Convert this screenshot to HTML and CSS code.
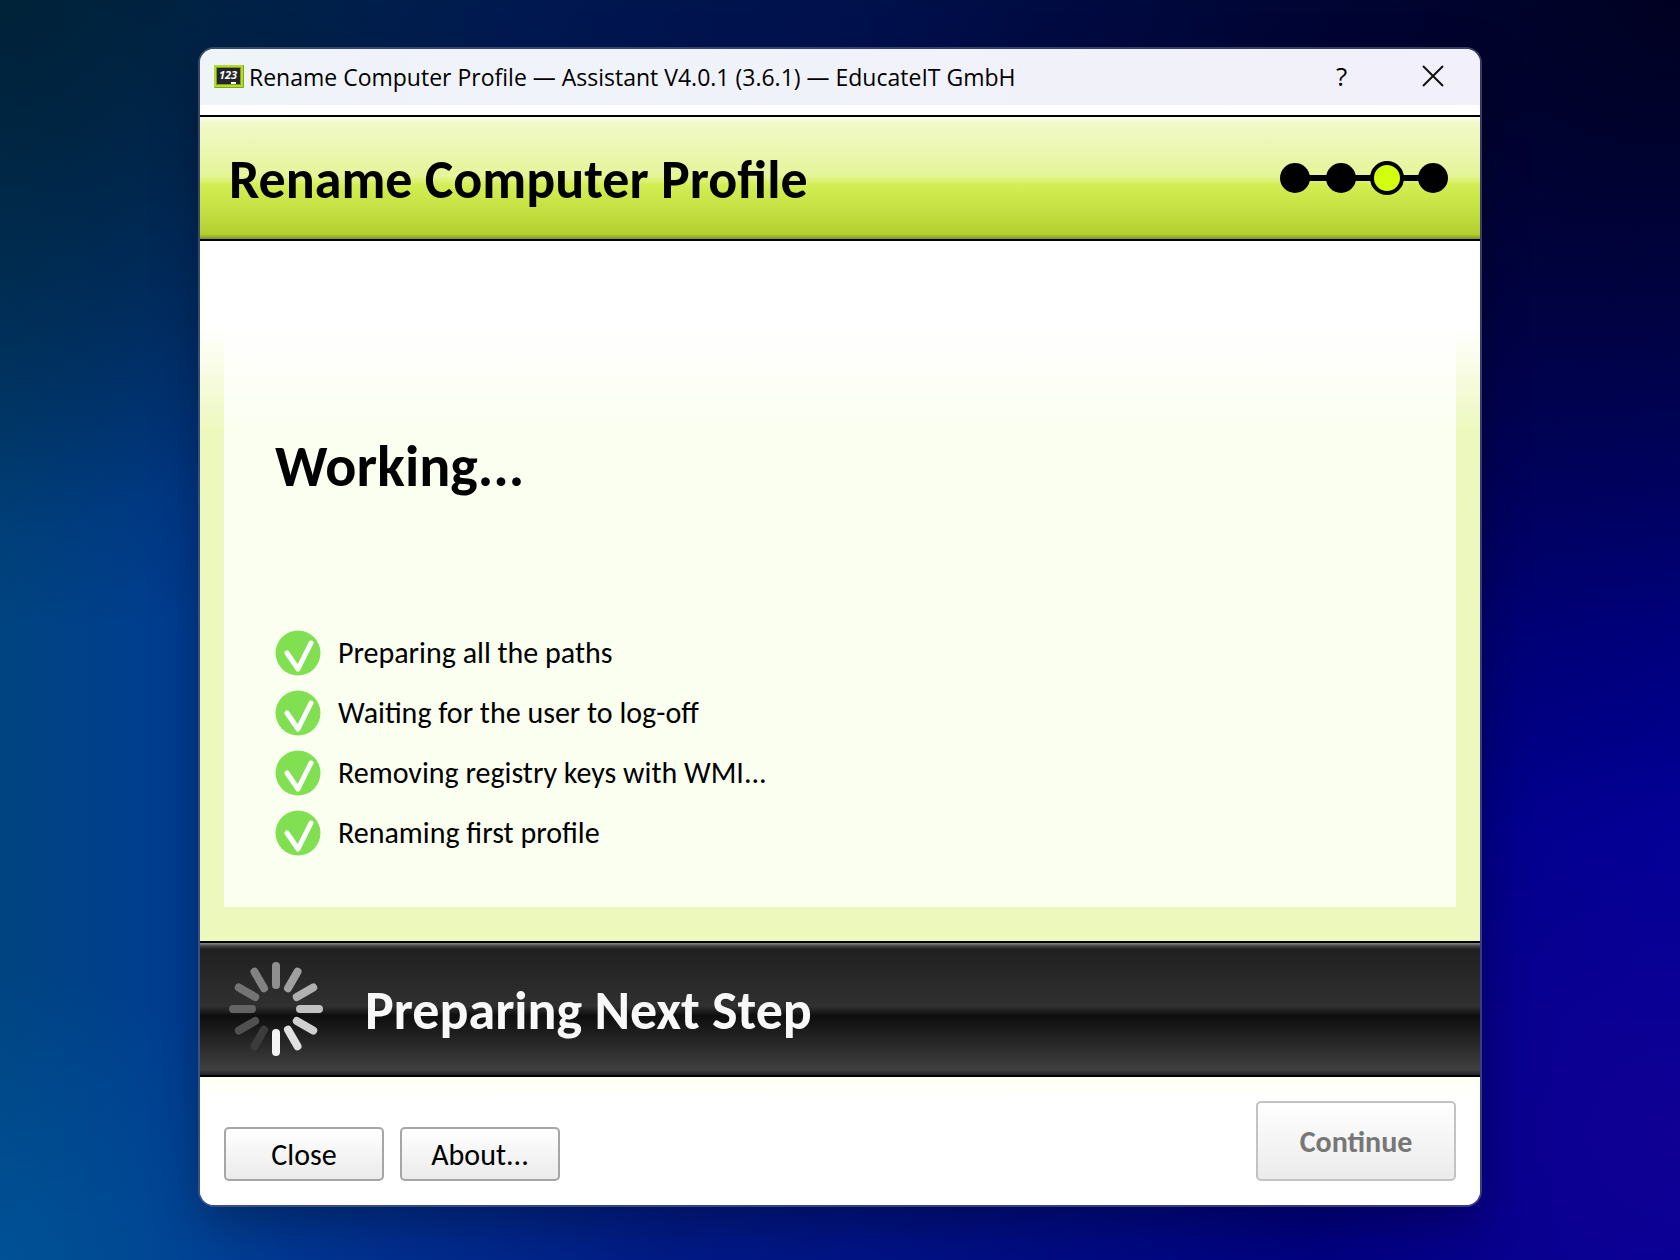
FILE: index.html
```
<!DOCTYPE html>
<html lang="en">
<head>
    <meta charset="UTF-8">
    <meta name="viewport" content="width=device-width, initial-scale=1.0">
    <title>Rename Computer Profile</title>
    <link rel="stylesheet" href="styles.css">
</head>
<body>
    <div class="window">
        <div class="titlebar">
            <svg class="app-icon" width="30" height="23" viewBox="0 0 30 23">
                <rect width="30" height="23" rx="1" fill="#7fa80e"/>
                <rect width="29" height="22" rx="1" fill="#b4dc28"/>
                <rect x="2" y="2" width="25" height="18" fill="#7c9c1c"/>
                <rect x="3" y="3" width="23" height="16" fill="#24262a"/>
                <text x="14" y="14" text-anchor="middle" class="app-icon-text">123</text>
                <rect x="17" y="17" width="5" height="2" fill="#fff"/>
            </svg>
            <span class="caption">Rename Computer Profile — Assistant V4.0.1 (3.6.1) — EducateIT GmbH</span>
            <button type="button" class="caption-button" aria-label="Help">?</button>
            <button type="button" class="caption-button" aria-label="Close window">
                <svg width="22" height="22" viewBox="0 0 22 22">
                    <path d="M1 1L21 21M21 1L1 21" stroke="#111" stroke-width="2" fill="none"/>
                </svg>
            </button>
        </div>

        <header class="banner">
            <h1>Rename Computer Profile</h1>
            <svg class="steps" width="168" height="34" viewBox="0 0 168 34">
                <path d="M15 17H153" stroke="#000" stroke-width="6"/>
                <circle cx="15" cy="17" r="15"/>
                <circle cx="61" cy="17" r="15"/>
                <circle cx="107" cy="17" r="15" fill="#d2ff10" stroke="#000" stroke-width="4"/>
                <circle cx="153" cy="17" r="15"/>
            </svg>
        </header>

        <main class="content">
            <div class="panel">
                <h2>Working...</h2>
                <ul class="tasks">
                    <li>
                        <svg width="46" height="46" viewBox="0 0 46 46"><circle cx="23" cy="23" r="22.5"/><path d="M12 23L23 39L36 13"/></svg>
                        Preparing all the paths
                    </li>
                    <li>
                        <svg width="46" height="46" viewBox="0 0 46 46"><circle cx="23" cy="23" r="22.5"/><path d="M12 23L23 39L36 13"/></svg>
                        Waiting for the user to log-off
                    </li>
                    <li>
                        <svg width="46" height="46" viewBox="0 0 46 46"><circle cx="23" cy="23" r="22.5"/><path d="M12 23L23 39L36 13"/></svg>
                        Removing registry keys with WMI...
                    </li>
                    <li>
                        <svg width="46" height="46" viewBox="0 0 46 46"><circle cx="23" cy="23" r="22.5"/><path d="M12 23L23 39L36 13"/></svg>
                        Renaming first profile
                    </li>
                </ul>
            </div>
        </main>

        <div class="status">
            <svg class="spinner" width="94" height="94" viewBox="-47 -47 94 94">
                <path d="M0 -24V-43" stroke="#8f8f8f"/>
                <path d="M0 -24V-43" stroke="#a0a0a0" transform="rotate(30)"/>
                <path d="M0 -24V-43" stroke="#b0b0b0" transform="rotate(60)"/>
                <path d="M0 -24V-43" stroke="#c0c0c0" transform="rotate(90)"/>
                <path d="M0 -24V-43" stroke="#d0d0d0" transform="rotate(120)"/>
                <path d="M0 -24V-43" stroke="#e0e0e0" transform="rotate(150)"/>
                <path d="M0 -24V-43" stroke="#f4f4f4" transform="rotate(180)"/>
                <path d="M0 -24V-43" stroke="#3c3c3c" transform="rotate(210)"/>
                <path d="M0 -24V-43" stroke="#505050" transform="rotate(240)"/>
                <path d="M0 -24V-43" stroke="#646464" transform="rotate(270)"/>
                <path d="M0 -24V-43" stroke="#747474" transform="rotate(300)"/>
                <path d="M0 -24V-43" stroke="#828282" transform="rotate(330)"/>
            </svg>
            <h2>Preparing Next Step</h2>
        </div>

        <footer class="actions">
            <button type="button">Close</button>
            <button type="button">About...</button>
            <button type="button" class="primary" disabled>Continue</button>
        </footer>
    </div>
</body>
</html>
```

FILE: styles.css
```
* {
    box-sizing: border-box;
}
body {
    margin: 0;
    min-height: 100vh;
    display: flex;
    padding: 47px 198px 53px;
    font-family: Calibri, Carlito, Lato, sans-serif;
    color: #000;
    background:
        radial-gradient(circle at 0% 100%, rgba(0, 84, 156, 0.8), rgba(0, 70, 156, 0) 14%),
        radial-gradient(circle at 100% 90%, rgba(20, 0, 146, 0.8), rgba(10, 0, 146, 0) 20%),
        radial-gradient(circle at 0% 0%, rgba(0, 34, 52, 0.8), rgba(0, 40, 80, 0) 25%),
        radial-gradient(circle at 100% 0%, rgba(0, 0, 28, 0.9), rgba(0, 0, 60, 0) 40%),
        linear-gradient(to bottom, rgba(0, 16, 40, 0.6), rgba(0, 0, 60, 0) 50%),
        linear-gradient(to right, #004480, #003c94 12%, #001a86 40%, #000080 80%, #000098);
}
h1, h2 {
    margin: 0;
    font-weight: bold;
}
.window {
    flex: 1;
    display: flex;
    flex-direction: column;
    border: 2px solid rgba(90, 100, 130, 0.6);
    border-radius: 16px;
    background: #fff;
    background-clip: padding-box;
    overflow: hidden;
    box-shadow: 0 16px 48px rgba(0, 0, 0, 0.3);
}
.titlebar {
    display: flex;
    align-items: center;
    height: 56px;
    padding: 0 2px 2px 14px;
    background: linear-gradient(to right, #eff4f9, #f2f0fa);
}
.app-icon {
    margin-right: 5px;
}
.app-icon-text {
    font: italic bold 11px "Open Sans", sans-serif;
    fill: #fff;
}
.caption {
    flex: 1;
    padding-top: 2px;
    font: 23px "Open Sans", sans-serif;
    white-space: nowrap;
}
.caption-button {
    display: flex;
    align-items: center;
    justify-content: center;
    width: 91px;
    height: 54px;
    padding: 0;
    border: 0;
    background: none;
    font: 26px "Open Sans", sans-serif;
}
.banner {
    display: flex;
    align-items: center;
    justify-content: space-between;
    height: 126px;
    margin-top: 10px;
    padding: 0 32px 0 29px;
    border: solid #000;
    border-width: 2px 0;
    background: linear-gradient(to bottom, #fbfee8, #f1f9ca 5%, #e5f599 48%, #d3ee52 56%, #b4d030 96%, #7d9423);
}
.banner h1 {
    padding-top: 4px;
    font-size: 54px;
}
.content {
    flex: 1;
    display: flex;
    padding: 0 24px 34px;
    background: linear-gradient(to bottom, #fff 85px, #edf8bd 190px);
}
.panel {
    flex: 1;
    padding: 190px 51px 0;
    background: linear-gradient(to bottom, #fff 85px, #fbfff0 190px);
}
.panel h2 {
    font-size: 58px;
    line-height: 72px;
}
.tasks {
    display: grid;
    gap: 14px;
    margin: 127px 0 0;
    padding: 0;
    list-style: none;
}
.tasks li {
    display: flex;
    align-items: center;
    gap: 17px;
    font-size: 30px;
    line-height: 46px;
}
.tasks circle {
    fill: #80e052;
}
.tasks path {
    fill: none;
    stroke: #fff;
    stroke-width: 5;
    stroke-linecap: round;
    stroke-linejoin: round;
}
.status {
    display: flex;
    align-items: center;
    gap: 42px;
    height: 136px;
    padding-left: 29px;
    border: solid #000;
    border-width: 2px 0;
    background: linear-gradient(to bottom, #8a8a8a, #444 3px, #202020 6px, #303030 48%, #0e0e0e 55%, #404040 96%, #222);
    color: #f8f8f8;
}
.status h2 {
    padding-top: 4px;
    font-size: 54px;
}
.spinner {
    stroke-width: 8;
    stroke-linecap: round;
}
.actions {
    display: flex;
    align-items: flex-end;
    gap: 16px;
    padding: 24px;
    background: linear-gradient(to bottom, #fdfff2, #fff 20px);
}
.actions button {
    width: 160px;
    height: 54px;
    padding: 0;
    border: 2px solid #a6a6a6;
    border-radius: 5px;
    background: linear-gradient(to bottom, #fff, #ebebeb);
    font-family: inherit;
    font-size: 30px;
    color: #000;
}
.actions .primary {
    width: 200px;
    height: 80px;
    margin-left: auto;
    border-color: #c3c3c3;
    font-weight: bold;
    color: #777;
}
```
